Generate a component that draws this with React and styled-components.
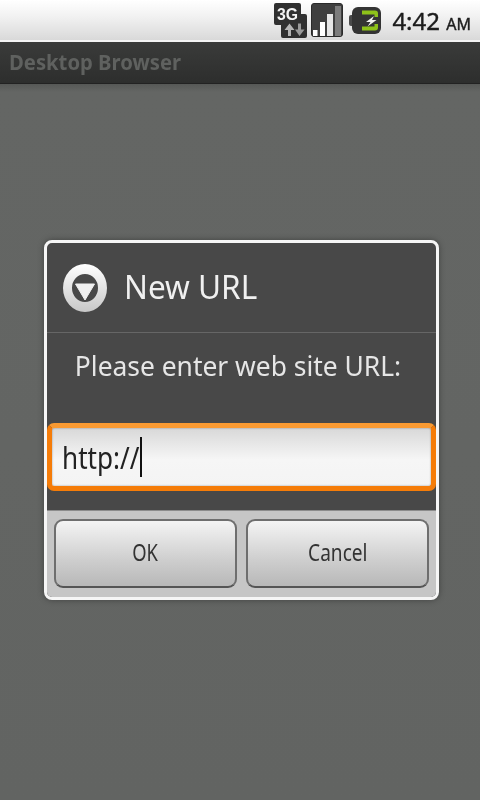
import styled, { createGlobalStyle } from "styled-components";

const Global = createGlobalStyle`
  html, body {
    margin: 0;
    padding: 0;
  }
  body {
    font-family: "Noto Sans", "Open Sans", sans-serif;
  }
`;

const Badge3G = () => (
  <svg width="33" height="35" viewBox="0 0 33 35">
    <path d="M2 0h23a2 2 0 0 1 2 2v9h4a2 2 0 0 1 2 2v20a2 2 0 0 1-2 2H9a2 2 0 0 1-2-2V22H2a2 2 0 0 1-2-2V2a2 2 0 0 1 2-2z" fill="#303030" />
    <text x="3" y="17" fontFamily="Liberation Sans, sans-serif" fontSize="16" fontWeight="700" fill="#f4f4f4" textLength="21" lengthAdjust="spacingAndGlyphs">3G</text>
    <path d="M14 33v-6h-3.500l5-6.500 5 6.500H17v6z" fill="#b5b5b5" />
    <path d="M24 20.500v6h-3l4.500 6.500 5-6.500H27v-6z" fill="#9a9a9a" />
  </svg>
);

const Signal = () => (
  <svg width="32" height="34" viewBox="0 0 32 34">
    <rect x="0.500" y="0.500" width="31" height="33" rx="2.500" fill="#3f3f3f" stroke="#2a2a2a" />
    <rect x="2" y="27" width="4.500" height="6" fill="#fff" />
    <rect x="9" y="19" width="5" height="14" fill="#fff" />
    <rect x="16" y="11" width="6" height="22" fill="#e6e6e6" />
    <rect x="24" y="3" width="6" height="30" fill="#7c7c7c" />
  </svg>
);

const Battery = () => (
  <svg width="32" height="27" viewBox="0 0 32 27">
    <rect x="0" y="8" width="5" height="11" rx="2" fill="#4a4a4a" />
    <rect x="3" y="0" width="29" height="27" rx="6" fill="#343434" />
    <path d="M13 3.500h13a3 3 0 0 1 3 3v3.500h-3.500V7.500H13zM13 23.500h13a3 3 0 0 0 3-3V17h-3.500v2.500H13z" fill="#8ec21a" />
    <path d="M25 9l-8 6h4.500l-3 4.500 9-6.500H23l2-4z" fill="#f2f2f2" />
  </svg>
);

const FormatIcon = () => (
  <svg width="44" height="48" viewBox="0 0 44 48">
    <defs>
      <linearGradient id="ring" x1="0" y1="0" x2="0" y2="1">
        <stop offset="0" stopColor="#ffffff" />
        <stop offset="1" stopColor="#c8c8c8" />
      </linearGradient>
    </defs>
    <path
      fillRule="evenodd"
      d="M22 0a22 24 0 1 0 0 48a22 24 0 1 0 0-48zM22 10a13 14 0 1 1 0 28a13 14 0 1 1 0-28z"
      fill="url(#ring)"
    />
    <path d="M12.500 20h19L22 36z" fill="#f0f0f0" stroke="#f0f0f0" strokeLinejoin="round" />
  </svg>
);

const App = () => {
  return (
    <Screen>
      <Global />
      <StatusBar>
        <Badge3G />
        <SignalSlot>
          <Signal />
        </SignalSlot>
        <BatterySlot>
          <Battery />
        </BatterySlot>
        <Clock>
          4:42 <small>AM</small>
        </Clock>
      </StatusBar>
      <TitleBar>
        <Squeezed $x={0.92} $origin="left">Desktop Browser</Squeezed>
      </TitleBar>
      <Content>
        <Dialog>
          <Header>
            <FormatIcon />
            <Title>
              <Squeezed $x={0.955} $origin="left">New URL</Squeezed>
            </Title>
          </Header>
          <Message>Please enter web site URL:</Message>
          <Input>
            <InputText>http://</InputText>
            <Caret />
          </Input>
          <ButtonBar>
            <Button>
              <Squeezed $x={0.8}>OK</Squeezed>
            </Button>
            <Button>
              <Squeezed $x={0.83}>Cancel</Squeezed>
            </Button>
          </ButtonBar>
        </Dialog>
      </Content>
    </Screen>
  );
};

export default App;

const Screen = styled.div`
  width: 480px;
  height: 800px;
  display: flex;
  flex-direction: column;
  overflow: hidden;
  background: #626462;
`;

const StatusBar = styled.div`
  height: 40px;
  flex: none;
  display: flex;
  justify-content: flex-end;
  align-items: center;
  padding-right: 9px;
  background: linear-gradient(#ffffff 0%, #f2f2f2 40%, #d9d9d9 100%);
  border-bottom: 2px solid #f4f4f4;
  box-sizing: content-box;
  filter: blur(0.4px);
`;

const SignalSlot = styled.div`
  display: flex;
  margin-left: 4px;
`;

const BatterySlot = styled.div`
  display: flex;
  margin-left: 6px;
  margin-right: 11px;
`;

const Clock = styled.div`
  font-size: 24px;
  color: #1c1c1c;
  white-space: nowrap;
  -webkit-text-stroke: 0.4px #1c1c1c;

  small {
    font-size: 16px;
  }
`;

const Squeezed = styled.span`
  display: inline-block;
  white-space: nowrap;
  transform: scaleX(${(p) => p.$x});
  transform-origin: ${(p) => p.$origin || "center"};
`;

const TitleBar = styled.div`
  height: 42px;
  flex: none;
  display: flex;
  align-items: center;
  padding: 0 0 4px 9px;
  font-size: 22px;
  font-weight: 700;
  color: #5f615f;
  background: linear-gradient(#3a3b3a, #2d2e2d);
  border-bottom: 1px solid #222;
  box-sizing: border-box;
  filter: blur(0.4px);
`;

const Content = styled.div`
  flex: 1;
  padding: 156px 41px 0 44px;
  background: linear-gradient(#565856 0, #646664 8px, #626462 100%);
`;

const Dialog = styled.div`
  width: 395px;
  height: 360px;
  box-sizing: border-box;
  border: 3px solid #f6f6f6;
  border-radius: 8px;
  background: #484848;
  overflow: hidden;
  display: flex;
  flex-direction: column;
  box-shadow: 0 0 6px rgba(0, 0, 0, 0.35);
`;

const Header = styled.div`
  height: 89px;
  flex: none;
  display: flex;
  align-items: center;
  gap: 17px;
  padding-left: 16px;
  border-bottom: 1px solid #666;
`;

const Title = styled.div`
  font-size: 33px;
  color: #f0f0f0;
  filter: blur(0.3px);
  margin-top: -2px;
`;

const Message = styled.div`
  height: 90px;
  flex: none;
  padding-top: 14px;
  box-sizing: border-box;
  text-align: center;
  font-size: 26.400px;
  line-height: 38px;
  color: #e6e6e6;
  filter: blur(0.3px);
  margin-left: -7px;
`;

const Input = styled.div`
  height: 68px;
  flex: none;
  box-sizing: border-box;
  border: 5px solid #f57c08;
  border-top-color: #f99a32;
  border-radius: 7px;
  background: linear-gradient(#d8d8d8, #f6f6f6 55%, #f4f4f4);
  display: flex;
  align-items: center;
  padding-left: 10px;
  font-size: 30px;
  color: #222;
  box-shadow: inset 0 0 2px rgba(0, 0, 0, 0.4);
`;

const InputText = styled.span`
  display: inline-block;
  transform: scaleX(0.87);
  transform-origin: left;
  margin-right: -12px;
  filter: blur(0.3px);
`;

const Caret = styled.span`
  width: 2px;
  height: 40px;
  margin-left: 1px;
  background: #111;
`;

const ButtonBar = styled.div`
  margin-top: 19px;
  flex: 1;
  display: flex;
  gap: 9px;
  padding: 8px 7px 9px;
  background: #c6c6c6;
  border-top: 1px solid #8c8c8c;
`;

const Button = styled.div`
  flex: 1;
  display: flex;
  align-items: center;
  justify-content: center;
  border: 2px solid #6e6e6e;
  border-bottom-color: #555;
  border-radius: 9px;
  background: linear-gradient(#f4f4f4, #cecece 60%, #b8b8b8);
  font-size: 23px;
  color: #333;
  padding-bottom: 4px;
  filter: blur(0.3px);
`;
